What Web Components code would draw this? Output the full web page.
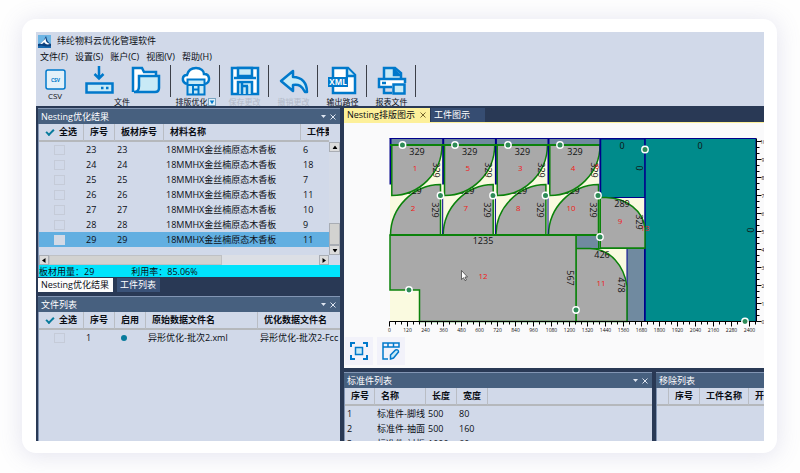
<!DOCTYPE html>
<html lang="zh-CN">
<head>
<meta charset="utf-8">
<title>纬纶物料云优化管理软件</title>
<style>
  html, body { margin: 0; height: 100%; }
  body { background: #fefefe; font: 9px/12px "Open Sans", "Noto Sans CJK SC", sans-serif; color: #0a0d14; }
</style>
</head>
<body>
<nest-app></nest-app>
<script>
const define = (name, html, setup) => {
  const template = document.createElement('template');
  template.innerHTML = html;
  customElements.define(name, class extends HTMLElement {
    constructor() {
      super();
      this.attachShadow({ mode: 'open' }).append(template.content.cloneNode(true));
    }
    connectedCallback() { if (setup) setup(this, this.shadowRoot); }
  });
};

/* Toolbar button: icon slot above a caption */
define('tool-button', `
<style>
  :host { display: block; }
  button { all: unset; display: flex; flex-direction: column; align-items: center; cursor: pointer; }
  button:disabled { color: #b3b9c8; cursor: default; }
  .cap { display: flex; font-size: 8px; line-height: 12px; height: 12px; white-space: nowrap; }
</style>
<button type="button"><slot name="icon"></slot><span class="cap"><slot></slot></span></button>`,
(el, root) => { root.querySelector('button').disabled = el.hasAttribute('off'); });

/* Group of toolbar buttons with a divider on the right */
define('tool-group', `
<style>
  :host { display: flex; justify-content: center; box-sizing: border-box; padding: 2px 9px 0; position: relative; }
  :host::after { content: ""; position: absolute; right: 0; top: 1px; width: 1px; height: 32px; background: #3c3f48; }
</style><slot></slot>`);

/* Dockable panel with caption bar */
define('dock-panel', `
<style>
  :host { display: flex; flex-direction: column; min-width: 0; min-height: 0; overflow: hidden; background: #d1d9e9; }
  header { display: flex; align-items: center; height: 15px; flex: none; padding: 0 3px; background: #47607f; color: #fff; border-top: 1px solid #8295b3; white-space: nowrap; }
  h2 { flex: 1; margin: 0; font: inherit; }
  button { all: unset; display: flex; width: 9px; height: 12px; align-items: center; justify-content: center; }
  .body { flex: 1; display: flex; flex-direction: column; min-height: 0; border-left: 1px solid #8295b3; }
  :host([bare]) button { display: none; }
</style>
<header><h2></h2>
  <button type="button" aria-label="菜单"><svg width="5" height="3"><path d="M0 0h5L2.500 3z" fill="#dfe6f2"/></svg></button>
  <button type="button" aria-label="关闭"><svg width="6" height="6"><path d="M.5 .5l5 5M5.500 .5l-5 5" stroke="#dfe6f2"/></svg></button>
</header>
<div class="body"><slot></slot></div>`,
(el, root) => { root.querySelector('h2').textContent = el.getAttribute('heading'); });

/* Data table; columns and rows come from the GRIDS entry named by its "source" attribute */
const GRIDS = {
  boards: {
    cols: [45, 31, 49, 137, 0],
    head: ['@all', '序号', '板材序号', '材料名称', '工件数'],
    rows: [[23, 6], [24, 18], [25, 7], [26, 11], [27, 10], [28, 9], [29, 11]]
      .map(([n, count]) => ['@box', n, n, '18MMHX金丝楠原态木香板', count]),
    active: 6
  },
  files: {
    cols: [45, 31, 31, 112, 0],
    head: ['@all', '序号', '启用', '原始数据文件名', '优化数据文件名'],
    rows: [['@box', '1', '@dot', '异形优化-批次2.xml', '异形优化-批次2-Fcc']]
  },
  parts: {
    cols: [30, 51, 31, 31, 0],
    head: ['序号', '名称', '长度', '宽度', ''],
    rows: [['1', '标准件-脚线', '500', '80'], ['2', '标准件-抽面', '500', '160'], ['3', '标准件-衬板', '1000', '60']]
      .map(r => [...r, ''])
  },
  removed: { cols: [12, 31, 49, 0], head: ['', '序号', '工件名称', '开料'], rows: [] }
};
const cell = v => {
  if (v === '@all') return '<label><input type="checkbox" class="all" checked>全选</label>';
  if (v === '@box') return '<input type="checkbox" class="box" aria-label="选择">';
  if (v === '@dot') return '<input type="radio" class="dot" checked aria-label="启用">';
  return v;
};
define('data-grid', `
<style>
  :host { display: block; min-width: 0; min-height: 0; overflow: hidden; }
  table { width: 100%; table-layout: fixed; border-collapse: separate; border-spacing: 0; }
  th, td { padding: 0 0 0 2px; text-align: left; white-space: nowrap; overflow: hidden; line-height: 14px; height: 15px; }
  th { box-sizing: border-box; height: 18px; padding-left: 6px; border-right: 1px solid #b9bdc4; border-bottom: 2px solid #b5b8bc; font-weight: 700; }
  th:last-child { border-right: 0; }
  tr.active td { background: #62afe1; }
  label { display: flex; align-items: center; gap: 5px; }
  input { appearance: none; margin: 0; box-sizing: border-box; display: block; }
  .all { width: 9px; height: 9px; }
  .all::before { content: ""; display: block; box-sizing: border-box; width: 8px; height: 5px; border: solid #087b9c; border-width: 0 0 2px 2px; transform: translate(1px, 1px) rotate(-45deg); }
  .box { width: 11px; height: 10px; margin-left: 13px; border: 1px solid #c5cbd8; }
  .active .box { background: #d3dae6; border-color: #d3dae6; }
  .dot { width: 6px; height: 6px; margin-left: 4px; border-radius: 50%; background: #087b9c; }
</style><table></table>`,
(el, root) => {
  const g = GRIDS[el.getAttribute('source')];
  root.querySelector('table').innerHTML =
    '<colgroup>' + g.cols.map(w => w ? `<col style="width:${w}px">` : '<col>').join('') + '</colgroup>' +
    '<thead><tr>' + g.head.map(h => `<th scope="col">${cell(h)}</th>`).join('') + '</tr></thead><tbody>' +
    g.rows.map((r, i) => `<tr${i === g.active ? ' class="active"' : ''}>` + r.map(c => `<td>${cell(c)}</td>`).join('') + '</tr>').join('') + '</tbody>';
});

/* Scroll bar, horizontal unless "vertical" is set */
define('scroll-bar', `
<style>
  :host { display: flex; height: 10px; background: #dcdfe5; }
  button { all: unset; flex: none; box-sizing: border-box; width: 10px; height: 10px; display: flex; align-items: center; justify-content: center; background: #dcdcdc; border: 1px solid #a9adb4; }
  .track { flex: 1; display: flex; }
  .thumb { flex: 0 0 64%; box-sizing: border-box; background: #d2d2d0; border: 1px solid #bfc1c4; }
  :host([vertical]) { flex-direction: column; width: 11px; height: auto; background: #d5dbe7; }
  :host([vertical]) button { width: auto; }
  :host([vertical]) .track { flex-direction: column; justify-content: flex-end; }
  :host([vertical]) .thumb { flex-basis: 24%; border-color: #a9adb4; }
  :host([vertical]) svg { transform: rotate(90deg); }
</style>
<button type="button" aria-label="向前"><svg width="4" height="5"><path d="M3.500 0v5L0 2.500z"/></svg></button>
<div class="track"><div class="thumb"></div></div>
<button type="button" aria-label="向后"><svg width="4" height="5"><path d="M.5 0v5L4 2.500z"/></svg></button>`);

/* Tab */
define('dock-tab', `
<style>
  :host { display: block; }
  button { all: unset; display: flex; align-items: center; gap: 5px; height: 14px; padding: 0 4px 0 3px; white-space: nowrap; color: #fff; background: #3a5278; }
  :host([look="white"]) button { background: #fcfcfc; color: #0a0d14; }
  :host([look="yellow"]) button { background: #fdf09a; color: #0a0d14; }
  :host([look="wide"]) button { padding-right: 15px; background: #364d72; }
</style><button type="button" role="tab"><slot></slot></button>`);

/* Cutting layout drawing */
define('nest-diagram', `
<style>
  :host { display: block; overflow: hidden; }
  svg { display: block; width: 100%; height: 100%; }
  text { font: 9px "Open Sans", sans-serif; text-anchor: middle; dominant-baseline: central; fill: #111; }
  .red { fill: #f01818; font-size: 8px; }
  .tick { font-size: 5px; }
</style>
<svg viewBox="344 123 420 214" preserveAspectRatio="xMinYMin slice" role="img" aria-label="排版图示"></svg>`,
(el, root) => {
  const out = [];
  const rect = (x, y, w, h, fill, extra = '') => out.push(`<rect x="${x}" y="${y}" width="${w}" height="${h}" fill="${fill}" ${extra}/>`);
  const path = (d, fill = 'none', stroke = '#0b820b', width = 1.5) => out.push(`<path d="${d}" fill="${fill}" stroke="${stroke}" stroke-width="${width}"/>`);
  const text = (x, y, s, cls = '', turn = 0) => out.push(`<text x="${x}" y="${y}" class="${cls}"${turn ? ` transform="rotate(${turn} ${x} ${y})"` : ''}>${s}</text>`);
  const teal = '#008b8b', grey = '#a9a9a9', slate = '#708aa0', cream = '#fafae0', navy = '#00008b';

  rect(390, 138.5, 366, 183, cream);
  rect(390, 139, 210, 6, slate);
  const xs = [390, 442.7, 495.4, 548];
  const upper = ['1', '5', '3', '4'], lower = ['2', '7', '8', '10'];
  xs.forEach((x, i) => {
    path(`M${x + .5} 235A51 51 0 0 1 ${x + 50.5} 184.500V235Z`, grey);
    text(x + 24, 190, '329');
    text(x + 45, 210, '329', '', 90);
    text(x + 23, 207, lower[i], 'red');
  });
  xs.forEach((x, i) => {
    path(`M${x + .5} 138.500V184.500`, 'none', navy, 2);
    path(`M${x + 1.8} 145H${x + 52}A50.500 50.500 0 0 1 ${x + 1.8} 195.500Z`, grey);
    text(x + 27, 151, '329');
    text(x + 46, 170, '329', '', 90);
    text(x + 25, 167, upper[i], 'red');
    if (i) path(`M${x} 196V235`, 'none', navy, 1);
  });
  text(597, 165, '6', 'red');
  path('M390 145H600', 'none', '#0b820b', 2);
  rect(600, 139, 45, 58.5, teal, `stroke="${navy}"`);
  rect(645, 139, 111, 182.5, teal);
  path('M600.500 138.500V197', 'none', navy, 1.5);
  path('M645 139V321', 'none', navy, 1.5);
  path('M600 197.500H606C627 198 643 211 645 228V248H600Z', grey);
  text(622, 203, '289'); text(639, 222, '329', '', 90); text(620, 220, '9', 'red'); text(645, 227, '13', 'red');
  rect(576, 235, 24, 13.5, slate, 'stroke="#0b820b"');
  rect(627, 248.5, 17.5, 73, slate, `stroke="${navy}"`);
  path('M576 248.500H590C611 249 624 266 627 286V321.500H576Z', grey);
  path('M576 248.500H645', 'none', '#0b820b', 1);
  path('M390 235H576V321.500H419.500V290H390Z', grey);
  path('M390 235H600', 'none', '#0b820b', 2);
  path('M598.500 184V248M600.500 197V248', 'none', '#0b820b', 1);
  text(483, 240, '1235'); text(570, 278, '567', '', 90); text(483, 275, '12', 'red');
  text(602, 254, '426'); text(621, 285, '478', '', 90); text(601, 282, '11', 'red');
  text(622, 145, '0'); text(639, 168, '0', '', 90); text(700, 145, '0'); text(750, 230, '0', '', 90);
  path('M389.500 138.500H756V321.500', 'none', navy, 1);

  path('M389.500 321.500H756.500V138.500', 'none', '#000', 1);
  for (let i = 0; i <= 61; i++) {
    const x = 389.5 + i * 6, major = i % 3 === 0;
    path(`M${x} 321.500v${major ? 5 : 3}`, 'none', '#000', 1);
    if (major) text(x, 330, i * 40, 'tick');
  }
  for (let i = 0; i <= 30; i++) {
    const y = 321.5 - i * 6, major = i % 3 === 0;
    path(`M756.500 ${y}h${major ? 5 : 3}`, 'none', '#000', 1);
    if (major) text(763, y, i / 3, 'tick');
  }
  [[402.5, 145], [455, 145], [508, 145], [560, 145], [440.5, 195.5], [493, 195.5], [545.5, 195.5], [598, 195.5],
   [600, 237], [645, 149.5], [409, 290], [576, 310], [745, 321.5]]
    .forEach(([x, y]) => out.push(`<circle cx="${x}" cy="${y}" r="3.200" fill="#2e8b57" stroke="#fff" stroke-width="1.400"/>`));
  out.push('<path d="M461.500 270.500v9l2-1.800 1.500 3 1.400-.7-1.500-3h2.600z" fill="#fff" stroke="#333" stroke-width=".7"/>');
  root.querySelector('svg').innerHTML = out.join('');
});

define('nest-app', `
<style>
  :host { display: flex; box-sizing: border-box; min-height: 100%; height: 100vh; padding: 19px 23px 20px 22px; }
  .card { flex: 1; display: flex; min-width: 0; padding: 13px 13px 12px 14px; border-radius: 14px; background: #fff; box-shadow: 0 2px 22px 2px rgba(110, 110, 170, .17); box-sizing: border-box; }
  .app { flex: 1; display: flex; flex-direction: column; min-width: 0; overflow: hidden; background: #d1d9e9; }
  .caption { display: flex; align-items: center; gap: 6px; height: 18px; padding-left: 2px; flex: none; }
  h1 { margin: 0; font: inherit; }
  nav { display: flex; gap: 7px; height: 13px; padding-left: 4px; flex: none; }
  nav button { all: unset; line-height: 13px; white-space: nowrap; }
  .tools { display: flex; height: 43px; flex: none; overflow: hidden; padding-top: 1px; box-sizing: border-box; }
  .tools svg { display: block; width: 30px; height: 30px; fill: none; stroke: #0079cb; stroke-width: 2.5; }
  .csv { padding: 2px 0 0 4px; }
  .csv svg { height: 24px; }
  .pair { display: flex; gap: 17px; }
  .cap { font-size: 8px; line-height: 12px; }
  .tools tool-group { width: 49px; flex: none; }
  .tools tool-group.first { width: 101px; flex-direction: column; align-items: center; justify-content: flex-start; padding: 2px 6px 0 9px; }
  .drop { width: 8px !important; height: 8px !important; stroke: none !important; background: #dff0fa; border: 1px solid #78a4c0; box-sizing: border-box; margin-top: 2px; }
  .work { flex: 1; min-height: 0; display: grid; grid-template-columns: 302fr 420fr; gap: 4px; padding: 2px 0 0 2px; background: #293955; }
  .col { display: flex; flex-direction: column; min-width: 0; min-height: 0; }
  .grow { flex: 1; }
  .list { display: grid; grid-template-columns: 1fr 11px; }
  .list data-grid { height: 131px; }
  .list scroll-bar[vertical] { margin-top: 18px; }
  .status { display: flex; gap: 37px; height: 12px; background: #00e3fc; line-height: 13px; }
  .tabs { display: flex; gap: 1px; height: 14px; flex: none; }
  .low { margin: 1px 0 4px; gap: 4px; }
  .canvas { display: flex; flex-direction: column; flex: none; background: #fafafb; border-top: 1px solid #fdf09a; }
  .acts { display: flex; gap: 4px; height: 31px; padding-left: 1px; }
  .acts button { all: unset; width: 28px; height: 28px; display: flex; align-items: center; justify-content: center; background: #f2f2fa; }
  .lists { flex: 1; min-height: 0; display: grid; grid-template-columns: 308fr 108fr; gap: 4px; margin-top: 4px; }
</style>
<main class="card"><div class="app">
  <div class="caption">
    <svg width="13" height="13" viewBox="0 0 13 13"><path d="M0 0h13v13H0z" fill="#6db5e4"/><path d="M0 9c4 0 6-4 8-8 1 3 1 6 5 8v4H0z" fill="#0b3f7d"/><path d="M2 9l6-6c-1 3 1 5 4 6-3 1-5 0-6-2-1 2-2 2-4 2z" fill="#fff"/><path d="M0 11q3-1 6 0t7 0v2H0z" fill="#1668ae"/></svg>
    <h1>纬纶物料云优化管理软件</h1>
  </div>
  <nav><button>文件(F)</button><button>设置(S)</button><button>账户(C)</button><button>视图(V)</button><button>帮助(H)</button></nav>
  <div class="tools">
    <div class="csv"><tool-button><svg slot="icon" viewBox="0 0 30 24"><rect x="6" y="4" width="19" height="19" rx="2" fill="#e3f1f9" stroke-width="1.500"/><text x="15.500" y="15.500" text-anchor="middle" font-size="5" font-weight="700" fill="#0079cb" stroke="none">CSV</text></svg>CSV</tool-button></div>
    <tool-group class="first">
      <div class="pair">
        <svg viewBox="0 0 30 30"><path d="M15 0v12M10.500 8l4.500 4.500L19.500 8M2.500 17.500h26v9h-26z"/><path d="M4 19h23v6H4z" fill="#c8eaf6" stroke="none"/><path d="M17 22h2.500M22 22h2.500"/></svg>
        <svg viewBox="0 0 30 30"><path d="M2 26V2h9l2 4h12v4" fill="#fff"/><path d="M8 10h20v12c0 2-1 4-4 4H3c4 0 5-2 5-6z" fill="#c8eaf6"/></svg>
      </div>
      <span class="cap">文件</span>
    </tool-group>
    <tool-group><tool-button><svg slot="icon" viewBox="0 0 30 30"><path d="M6 18C0 16 1 9 6 9c1-4 4-7 9-7s8 3 8 6c6 0 7 8 1 10" fill="#fff"/><path d="M6.500 13.500h17v15h-17zM6.500 19h17M12 19v9M17.500 19v9M12 23.500h5" fill="#c8eaf6" stroke-width="2"/></svg>排版优化<svg class="drop" viewBox="0 0 8 8"><path d="M1 2h6L4 7z" fill="#0079cb"/></svg></tool-button></tool-group>
    <tool-group><tool-button off><svg slot="icon" viewBox="0 0 30 30"><path d="M2 2h26v26H2z" fill="#fff"/><path d="M8 2h14v8H8z" fill="#c8eaf6"/><path d="M4 12h22M8 28V16h14v12" fill="#c8eaf6"/><path d="M12 17v11M17 20v8M12 20h6"/></svg>保存更改</tool-button></tool-group>
    <tool-group><tool-button off><svg slot="icon" viewBox="0 0 30 30"><path d="M14 5L2 15l12 10v-6c6-1 9 1 12 7h2c0-9-5-15-14-15z" fill="#c8eaf6" stroke-linejoin="round"/></svg>撤销更改</tool-button></tool-group>
    <tool-group><tool-button><svg slot="icon" viewBox="0 0 30 30"><path d="M5 11V2h15l7 7v18H5v-6" fill="#fff"/><path d="M19 2v8h8" fill="#c8eaf6"/><path d="M0 11h20v10H0z" fill="#0079cb" stroke="none"/><text x="10" y="19" text-anchor="middle" font-size="8" font-weight="700" fill="#fff" stroke="none">XML</text></svg>输出路径</tool-button></tool-group>
    <tool-group><tool-button><svg slot="icon" viewBox="0 0 30 30"><path d="M7 13V2h11l6 5v6" fill="#c8eaf6"/><path d="M17 2v7h7" fill="#0079cb"/><path d="M15 21H2v-8h26v4" fill="#fff"/><path d="M7 21v6h8M5 17h4"/><path d="M16.500 18.500h11v9h-11z" fill="#c8eaf6"/></svg>报表文件</tool-button></tool-group>
  </div>
  <div class="work">
    <div class="col">
      <dock-panel heading="Nesting优化结果">
        <div class="list"><data-grid source="boards"></data-grid><scroll-bar vertical></scroll-bar><scroll-bar></scroll-bar></div>
        <div class="status"><span>板材用量：29</span><span>利用率：85.06%</span></div>
      </dock-panel>
      <div class="tabs low" role="tablist"><dock-tab look="white">Nesting优化结果</dock-tab><dock-tab>工件列表</dock-tab></div>
      <dock-panel class="grow" heading="文件列表"><data-grid source="files"></data-grid></dock-panel>
    </div>
    <div class="col">
      <div class="tabs" role="tablist"><dock-tab look="yellow">Nesting排版图示 <svg width="6" height="6"><path d="M.5 .5l5 5M5.500 .5l-5 5" stroke="#75652f"/></svg></dock-tab><dock-tab look="wide">工件图示</dock-tab></div>
      <div class="canvas">
        <nest-diagram></nest-diagram>
        <div class="acts">
          <button type="button" aria-label="适应窗口"><svg width="18" height="18" fill="none" stroke="#0079cb" stroke-width="2"><path d="M1 5V1h4M13 1h4v4M17 13v4h-4M5 17H1v-4"/><path d="M5.500 5.500h7v7h-7z" fill="#c8eaf6" stroke-width="1.500"/></svg></button>
          <button type="button" aria-label="编辑"><svg width="18" height="18" fill="none" stroke="#0079cb" stroke-width="1.500"><path d="M1 1h16v4H1zM6 1v4M11.500 1v4M1 5v12h5" /><path d="M8.500 13l5-5q3-1 3 2l-5 6-3 1z" fill="#c8eaf6"/></svg></button>
        </div>
      </div>
      <div class="lists">
        <dock-panel heading="标准件列表"><data-grid source="parts"></data-grid></dock-panel>
        <dock-panel heading="移除列表" bare><data-grid source="removed"></data-grid></dock-panel>
      </div>
    </div>
  </div>
</div></main>`);
</script>
</body>
</html>
